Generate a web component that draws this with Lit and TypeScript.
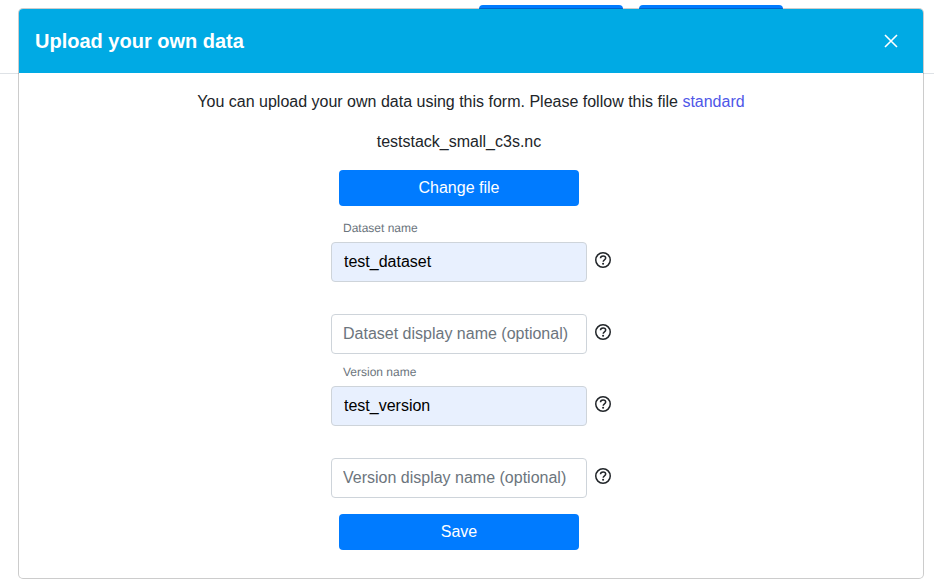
import { LitElement, html, css, nothing } from "lit";
import { customElement, property } from "lit/decorators.js";

@customElement("upload-field")
class UploadField extends LitElement {
  @property() label = "";
  @property() value = "";
  @property({ attribute: "field-id" }) fieldId = "field";

  static styles = css`
    :host {
      display: grid;
      grid-template-columns: 256px 16px;
      grid-template-rows: 32px 40px;
      column-gap: 8px;
    }
    .label {
      grid-row: 1;
      grid-column: 1;
      align-self: center;
      padding: 4px 12px 0;
      color: #6c757d;
      font-size: 12px;
      line-height: 16px;
      text-rendering: geometricPrecision;
    }
    .input {
      grid-row: 2;
      grid-column: 1;
      box-sizing: border-box;
      width: 100%;
      height: 40px;
      margin: 0;
      padding: 0 11px;
      border: 1px solid #ced4da;
      border-radius: 4px;
      background: #fff;
      color: #000;
      font: inherit;
      outline: none;
    }
    .input::placeholder {
      color: #6c757d;
      opacity: 1;
    }
    .filled {
      padding: 0 12px;
      background: #e8f0fe;
    }
    .help {
      grid-row: 2;
      grid-column: 2;
      align-self: center;
      width: 16px;
      height: 16px;
      margin: 0 0 4px;
      padding: 0;
      border: 0;
      background: none;
      color: #212529;
      cursor: pointer;
    }
    .icon {
      display: block;
      width: 16px;
      height: 16px;
    }
  `;

  render() {
    return html`
      ${this.value
        ? html`<label class="label" for=${this.fieldId}>${this.label}</label>`
        : nothing}
      <input
        class="input ${this.value ? "filled" : ""}"
        id=${this.fieldId}
        type="text"
        aria-label=${this.label}
        placeholder=${this.label}
        .value=${this.value}
      />
      <button class="help" type="button" aria-label="Help">
        <svg class="icon" viewBox="0 0 16 16" fill="none" stroke="currentColor" stroke-width="1.5">
          <circle cx="8" cy="8" r="7.25" />
          <path d="M5.5 6.3C5.5 4.7 6.5 3.9 8.1 3.9c1.5 0 2.6.8 2.6 2.2 0 1.8-2.5 1.7-2.5 3.6" />
          <circle cx="8.1" cy="11.8" r="1.05" fill="currentColor" stroke="none" />
        </svg>
      </button>
    `;
  }
}

@customElement("app-root")
class AppRoot extends LitElement {
  static styles = css`
    :host {
      display: grid;
      align-items: start;
      min-height: 100vh;
      background: #fff;
      color: #212529;
      font: 16px/24px "Liberation Sans", Arial, sans-serif;
    }
    .toolbar,
    .modal {
      grid-area: 1 / 1;
    }
    .toolbar {
      display: flex;
      justify-content: center;
      gap: 16px;
      padding: 5px 0 32px 328px;
      border-bottom: 1px solid #dee2e6;
    }
    .primary {
      box-sizing: border-box;
      height: 36px;
      margin: 0;
      padding: 0;
      border: 0;
      border-radius: 4px;
      background: #007bff;
      color: #fff;
      font: inherit;
      cursor: pointer;
    }
    .tool {
      width: 144px;
    }
    .wide {
      width: 240px;
    }
    .modal {
      position: relative;
      margin: 8px 10px 9px 18px;
      border: 1px solid rgba(0, 0, 0, 0.2);
      border-radius: 5px;
      background: #fff;
      background-clip: padding-box;
    }
    .header {
      display: flex;
      align-items: center;
      justify-content: space-between;
      height: 64px;
      padding: 0 24px 0 16px;
      border-radius: 4px 4px 0 0;
      background: #00aae4;
      color: #fff;
    }
    .title {
      margin: 0;
      font-size: 20px;
      line-height: 30px;
    }
    .close {
      width: 16px;
      height: 16px;
      padding: 0;
      border: 0;
      background: none;
      color: #fff;
      cursor: pointer;
    }
    .cross {
      display: block;
      width: 16px;
      height: 16px;
    }
    .body {
      display: flex;
      flex-direction: column;
      align-items: center;
      padding: 17px 16px 28px;
    }
    .intro {
      margin: 0 0 16px;
    }
    .link {
      color: #4f57e8;
      text-decoration: none;
    }
    .form {
      display: grid;
      grid-template-columns: 256px 24px;
    }
    .file,
    .wide {
      grid-column: 1;
      justify-self: center;
    }
    .file {
      margin-bottom: 16px;
    }
    .change {
      margin-bottom: 4px;
    }
    .save {
      margin-top: 16px;
    }
    .fields {
      grid-column: 1 / -1;
    }
  `;

  render() {
    return html`
      <div class="toolbar">
        <button class="primary tool" type="button" aria-label="Previous"></button>
        <button class="primary tool" type="button" aria-label="Next"></button>
      </div>
      <section class="modal" role="dialog" aria-labelledby="title">
        <header class="header">
          <h1 class="title" id="title">Upload your own data</h1>
          <button class="close" type="button" aria-label="Close">
            <svg class="cross" viewBox="0 0 16 16" fill="none" stroke="currentColor" stroke-width="1.6">
              <path d="M2 2l12 12M14 2L2 14" />
            </svg>
          </button>
        </header>
        <div class="body">
          <p class="intro">
            You can upload your own data using this form. Please follow this file
            <a class="link" href="#standard">standard</a>
          </p>
          <form class="form" @submit=${(e: Event) => e.preventDefault()}>
            <span class="file">teststack_small_c3s.nc</span>
            <button class="primary wide change" type="button">Change file</button>
            <div class="fields">
              <upload-field field-id="dataset" label="Dataset name" value="test_dataset"></upload-field>
              <upload-field field-id="dataset-display" label="Dataset display name (optional)"></upload-field>
              <upload-field field-id="version" label="Version name" value="test_version"></upload-field>
              <upload-field field-id="version-display" label="Version display name (optional)"></upload-field>
            </div>
            <button class="primary wide save" type="submit">Save</button>
          </form>
        </div>
      </section>
    `;
  }
}
